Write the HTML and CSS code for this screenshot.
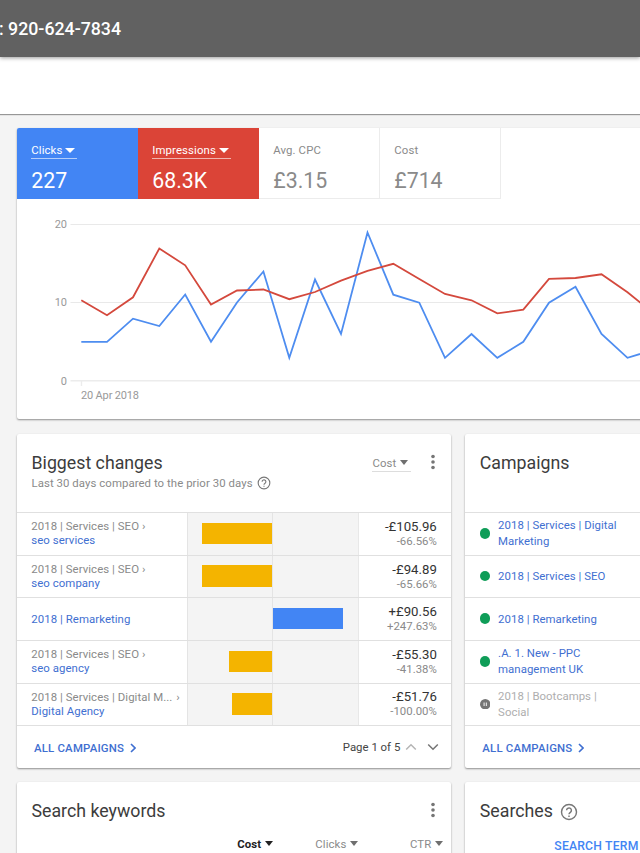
FILE: index.html
```html
<!DOCTYPE html>
<html lang="en">
<head>
    <meta charset="utf-8">
    <meta name="viewport" content="width=device-width, initial-scale=1">
    <title>Overview</title>
    <link rel="stylesheet" href="styles.css">
</head>

<body>
    <header class="topbar"><span>: 920-624-7834</span></header>
    <div class="subbar"></div>

    <main class="board">
        <section class="card chart-card">
            <div class="scores">
                <div class="score blue">
                    <span class="picker">Clicks <i class="caret"></i></span>
                    <strong>227</strong>
                </div>
                <div class="score red">
                    <span class="picker">Impressions <i class="caret"></i></span>
                    <strong>68.3K</strong>
                </div>
                <div class="score">
                    <span class="picker">Avg. CPC</span>
                    <strong>£3.15</strong>
                </div>
                <div class="score">
                    <span class="picker">Cost</span>
                    <strong>£714</strong>
                </div>
            </div>
            <svg class="chart" viewBox="17 199 640 220" width="640" height="220">
                <g class="grid">
                    <path d="M70.500 224.500H660M70.500 302.500H660"/>
                    <path class="base" d="M70.500 380.700H660M81.500 381V386"/>
                </g>
                <g class="axis">
                    <text x="67" y="228" text-anchor="end">20</text>
                    <text x="67" y="306.300" text-anchor="end">10</text>
                    <text x="67" y="384.500" text-anchor="end">0</text>
                    <text x="81" y="399.300" textLength="58">20 Apr 2018</text>
                </g>
                <polyline class="line-clicks" points="81.300,341.800 107,341.800 133,318.700 159.300,326 185.200,294.500 211,341.800 237,302.500 263.400,271.500 289.300,357.800 315,279.500 341,334 367.500,232.500 393.300,294.700 419.300,302.700 445,357.800 471.500,334 497.300,357.800 523.300,341.800 549,302.700 575.500,286.800 601.500,334 627.500,357.800 653,350"/>
                <polyline class="line-impr" points="81.300,300.300 107,315.300 133,297.300 159.300,248.500 185.200,265.300 211,304.500 237,290.500 263.400,289.500 289.300,299.200 315,292 341,280.700 367.500,270.900 393.300,263.800 419.300,279 445,294 471.500,300.300 497.300,313.300 523.300,309.700 549,278.900 575.500,278 601.500,274.300 627.500,292.300 653,313"/>
            </svg>
        </section>

        <section class="card">
            <div class="card-head">
                <div>
                    <h2>Biggest changes</h2>
                    <p class="sub">Last 30 days compared to the prior 30 days
                        <svg class="help" viewBox="0 0 24 24"><circle cx="12" cy="12" r="10"/><path d="M8.800 9.800a3.200 3.200 0 1 1 5.300 2.400C12.800 13.200 12 13.700 12 15"/><path d="M12 16.500v2"/></svg>
                    </p>
                </div>
                <div class="tools">
                    <span class="picker">Cost <i class="caret"></i></span>
                    <svg class="dots" viewBox="0 0 6 16"><circle cx="3" cy="2.500" r="1.800"/><circle cx="3" cy="8" r="1.800"/><circle cx="3" cy="13.500" r="1.800"/></svg>
                </div>
            </div>
            <div class="change">
                <div class="name"><span class="parent">2018 | Services | SEO <b>›</b></span><a>seo services</a></div>
                <div class="half neg"><i style="width:70.500px"></i></div>
                <div class="half pos"></div>
                <div class="amount"><span>-£105.96</span><small>-66.56%</small></div>
            </div>
            <div class="change">
                <div class="name"><span class="parent">2018 | Services | SEO <b>›</b></span><a>seo company</a></div>
                <div class="half neg"><i style="width:70.500px"></i></div>
                <div class="half pos"></div>
                <div class="amount"><span>-£94.89</span><small>-65.66%</small></div>
            </div>
            <div class="change">
                <div class="name"><a>2018 | Remarketing</a></div>
                <div class="half neg"></div>
                <div class="half pos"><i style="width:70px"></i></div>
                <div class="amount"><span>+£90.56</span><small>+247.63%</small></div>
            </div>
            <div class="change">
                <div class="name"><span class="parent">2018 | Services | SEO <b>›</b></span><a>seo agency</a></div>
                <div class="half neg"><i style="width:43px"></i></div>
                <div class="half pos"></div>
                <div class="amount"><span>-£55.30</span><small>-41.38%</small></div>
            </div>
            <div class="change">
                <div class="name"><span class="parent">2018 | Services | Digital M... <b class="far">›</b></span><a>Digital Agency</a></div>
                <div class="half neg"><i style="width:40.300px"></i></div>
                <div class="half pos"></div>
                <div class="amount"><span>-£51.76</span><small>-100.00%</small></div>
            </div>
            <div class="card-foot">
                <a class="all">ALL CAMPAIGNS <svg class="chev" viewBox="0 0 6 10"><path d="M1 1l4 4-4 4"/></svg></a>
                <span class="pager">Page 1 of 5
                    <svg class="off" viewBox="0 0 12 8"><path d="M1.200 6.500L6 1.700l4.800 4.800"/></svg>
                    <svg viewBox="0 0 12 8"><path d="M1.200 1.500L6 6.300l4.800-4.800"/></svg>
                </span>
            </div>
        </section>

        <section class="card">
            <div class="card-head"><h2>Campaigns</h2></div>
            <div class="campaign"><i class="dot"></i><a>2018 | Services | Digital<br>Marketing</a></div>
            <div class="campaign"><i class="dot"></i><a>2018 | Services | SEO</a></div>
            <div class="campaign"><i class="dot"></i><a>2018 | Remarketing</a></div>
            <div class="campaign"><i class="dot"></i><a>.A. 1. New - PPC<br>management UK</a></div>
            <div class="campaign paused">
                <svg class="pause" viewBox="0 0 11 11"><circle cx="5.500" cy="5.500" r="5.500"/><path d="M4.300 3.700v3.600M6.700 3.700v3.600"/></svg>
                <a>2018 | Bootcamps |<br>Social</a>
            </div>
            <div class="card-foot">
                <a class="all">ALL CAMPAIGNS <svg class="chev" viewBox="0 0 6 10"><path d="M1 1l4 4-4 4"/></svg></a>
            </div>
        </section>

        <section class="card">
            <div class="card-head short">
                <h2>Search keywords</h2>
                <div class="tools">
                    <svg class="dots" viewBox="0 0 6 16"><circle cx="3" cy="2.500" r="1.800"/><circle cx="3" cy="8" r="1.800"/><circle cx="3" cy="13.500" r="1.800"/></svg>
                </div>
            </div>
            <div class="cols">
                <span class="picker active">Cost <i class="caret"></i></span>
                <span class="picker">Clicks <i class="caret"></i></span>
                <span class="picker last">CTR <i class="caret"></i></span>
            </div>
        </section>

        <section class="card">
            <div class="card-head short">
                <h2>Searches
                    <svg class="help big" viewBox="0 0 24 24"><circle cx="12" cy="12" r="10"/><path d="M8.800 9.800a3.200 3.200 0 1 1 5.300 2.400C12.800 13.200 12 13.700 12 15"/><path d="M12 16.500v2"/></svg>
                </h2>
            </div>
            <div class="tabs"><a>SEARCH TERM</a></div>
        </section>
    </main>
</body>
</html>
```
FILE: styles.css
```css
*{box-sizing: border-box;}

body{
    margin: 0;
    height: 853px;
    overflow: hidden;
    background-color: #f4f4f4;
    font-family: Roboto, "Liberation Sans", sans-serif;
    font-size: 12px;
    color: #8a8a8a;}

h2, p{margin: 0; font-weight: 400;}

.topbar{
    position: relative;
    height: 57px;
    padding-top: 18px;
    background-color: #616161;
    box-shadow: 0 1px 4px rgba(0,0,0,.4);
    color: #fff;
    font-size: 17.760px;
    font-weight: 500;
    line-height: 22px;
    white-space: nowrap;}

.topbar span{margin-left: -1px;}

.subbar{
    height: 57px;
    background-color: #fff;
    box-shadow: 0 1px 1px rgba(0,0,0,.38);}

.board{
    display: grid;
    grid-template-columns: 434.300px 434.300px;
    gap: 14px;
    padding: 14px 17px;
    width: 917px;}

.card{
    background-color: #fff;
    border-radius: 2px;
    box-shadow: 0 1px 2px rgba(0,0,0,.42);}

.chart-card{
    grid-column: 1 / 3;
    height: 291.400px;
    margin-bottom: .4px;
    overflow: hidden;}

/* score tiles */
.scores{display: flex;}

.score{
    width: 121px;
    height: 71px;
    padding: 14px 14px 0 14.300px;
    border-right: 1px solid #ececec;
    border-bottom: 1px solid #ececec;}

.score.blue, .score.red{border: 0; color: #fff;}
.score.blue{background-color: #4285f4;}
.score.red{background-color: #db4437;}

.score strong{
    display: block;
    margin-top: 9px;
    font-size: 21.300px;
    font-weight: 400;
    line-height: 26px;}

.score .picker{border-bottom: 1px solid transparent; gap: 3px; padding-right: 2px;}
.score.blue .picker, .score.red .picker{border-bottom-color: rgba(255,255,255,.6);}

.picker{
    display: inline-flex;
    align-items: center;
    gap: 4px;
    height: 17px;
    font-size: 11.400px;
    letter-spacing: .1px;
    line-height: 16px;
    padding-right: 3px;}

.caret{
    border: 4.500px solid transparent;
    border-top: 5px solid currentColor;
    border-bottom: 0;}

.score .caret{border-left-width: 5px; border-right-width: 5px;}
.tools .caret, .cols .caret{color: #6f6f6f;}

/* chart */
.chart{display: block;}
.grid path{stroke: #e9e9e9; fill: none;}
.grid .base{stroke: #ececec; stroke-width: 1.400;}
.axis{font-size: 11px; fill: #999;}
.line-clicks, .line-impr{fill: none; stroke-width: 1.800;}
.line-clicks{stroke: #4e8df0;}
.line-impr{stroke: #d4493d;}

/* cards */
.card-head{
    display: flex;
    justify-content: space-between;
    height: 78.300px;
    padding: 18px 14px 0 14.500px;}

.card-head.short{height: 53px;}

.card h2{
    color: #3c3c3c;
    font-size: 17.760px;
    line-height: 22px;}

.sub{
    font-size: 11.400px;
    letter-spacing: .06px;
    line-height: 19px;
    display: flex;
    align-items: center;
    gap: 4px;}

.help{
    width: 14px;
    height: 14px;
    fill: none;
    stroke: #777;
    stroke-width: 1.900;}

.help.big{
    width: 18px;
    height: 18px;
    margin-left: 3px;
    vertical-align: -4px;}

.tools{
    display: flex;
    align-items: flex-start;
    gap: 19px;}

.tools .picker{
    margin-top: 3px;
    border-bottom: 1px solid #ddd;}

.dots{
    width: 6px;
    height: 16px;
    margin: 2px 1px 0 0;
    fill: #757575;}

.change{
    display: grid;
    grid-template-columns: 170px 86px 85.500px 1fr;
    height: 42.650px;
    border-top: 1px solid #e0e0e0;}

.name{
    display: flex;
    flex-direction: column;
    justify-content: center;
    padding: 0 0 1px 14.300px;
    font-size: 11.400px;
    line-height: 14px;
    letter-spacing: .06px;
    white-space: nowrap;}

.name b{font-weight: 400;}
.name .far{margin-left: 1px;}

a{color: #3f6fd1;}

.half{
    display: flex;
    align-items: center;
    background-color: #f4f4f4;}

.neg{justify-content: flex-end; border-left: 1px solid #e4e4e4; border-right: 1px solid #e4e4e4;}
.pos{border-right: 1px solid #e8e8e8;}
.half i{height: 21.500px; margin-top: -1px;}
.neg i{background-color: #f4b400;}
.pos i{background-color: #4285f4;}

.amount{
    display: flex;
    flex-direction: column;
    justify-content: center;
    padding-right: 14.500px;
    text-align: right;
    color: #333;
    font-size: 13.200px;
    line-height: 15px;}

.amount small{color: #8a8a8a; font-size: 11.400px; line-height: 15px;}

.campaign{
    display: flex;
    align-items: center;
    gap: 8px;
    height: 42.650px;
    padding: 0 0 1px 14.300px;
    border-top: 1px solid #e0e0e0;
    font-size: 11.400px;
    letter-spacing: .04px;
    line-height: 16px;}

.dot{
    width: 10.500px;
    height: 10.500px;
    border-radius: 50%;
    background-color: #0f9d58;}

.paused a{color: #aeaeae;}
.pause{width: 10.500px; height: 10.500px; fill: #757575;}
.pause path{stroke: #ddd; stroke-width: 1.300;}

.card-foot{
    display: flex;
    align-items: center;
    justify-content: space-between;
    height: 42.500px;
    padding: 0 12px 0 17px;
    border-top: 1px solid #e0e0e0;}

.all{
    display: flex;
    align-items: center;
    gap: 6px;
    padding-top: 1px;
    font-size: 11.400px;
    font-weight: 500;
    letter-spacing: .2px;}

.chev{width: 6px; height: 10px; fill: none; stroke: #3f6fd1; stroke-width: 1.600;}

.pager{
    display: flex;
    align-items: center;
    gap: 5px;
    color: #444;
    font-size: 11.400px;}

.pager svg{
    width: 12px;
    height: 8px;
    margin-right: 5px;
    fill: none;
    stroke: #757575;
    stroke-width: 1.500;}

.pager svg:last-child{margin-right: 0;}
.pager .off{stroke: #b5b5b5;}

.cols{
    display: flex;
    justify-content: flex-end;
    gap: 39px;
    height: 40px;
    padding-right: 5px;}

.cols .picker{
    height: 19px;
    border-bottom: 1px solid #ddd;}

.cols .last{margin-left: 9.500px;}
.cols .active, .cols .active .caret{color: #222; font-weight: 700;}

.tabs{
    padding-left: 89px;
    font-size: 12.200px;
    letter-spacing: .2px;
    line-height: 22px;
    font-weight: 500;
    white-space: nowrap;}

.tabs a{color: #4285f4;}
```
